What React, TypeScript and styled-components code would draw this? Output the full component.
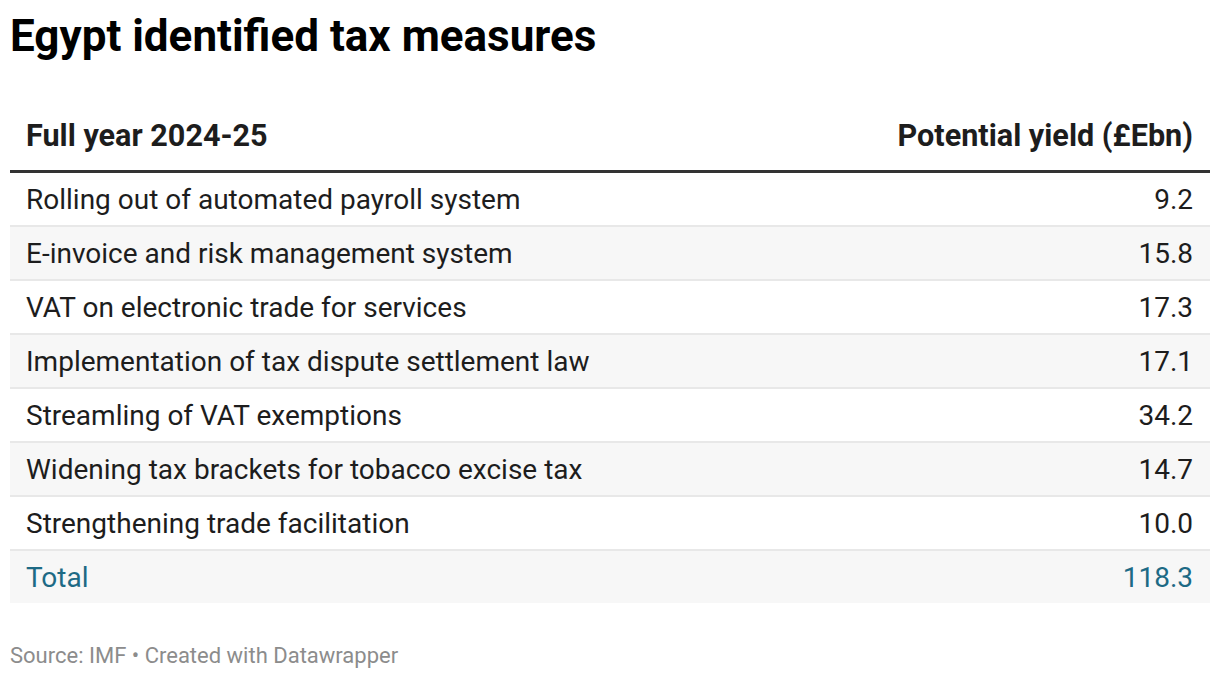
import styled, { createGlobalStyle } from "styled-components";

const rows: [string, string][] = [
  ["Rolling out of automated payroll system", "9.2"],
  ["E-invoice and risk management system", "15.8"],
  ["VAT on electronic trade for services", "17.3"],
  ["Implementation of tax dispute settlement law", "17.1"],
  ["Streamling of VAT exemptions", "34.2"],
  ["Widening tax brackets for tobacco excise tax", "14.7"],
  ["Strengthening trade facilitation", "10.0"],
];

export default function App() {
  return (
    <Page>
      <GlobalStyle />
      <Title>Egypt identified tax measures</Title>
      <Table>
        <Head>
          <span>Full year 2024-25</span>
          <span>Potential yield (£Ebn)</span>
        </Head>
        {rows.map(([label, value], i) => (
          <Row key={label} $striped={i % 2 === 1}>
            <span>{label}</span>
            <span>{value}</span>
          </Row>
        ))}
        <Row $striped $total>
          <span>Total</span>
          <span>118.3</span>
        </Row>
      </Table>
      <Footer>Source: IMF • Created with Datawrapper</Footer>
    </Page>
  );
}

const GlobalStyle = createGlobalStyle`
  body {
    margin: 0;
    background: #fff;
    font-family: Roboto, "Liberation Sans", sans-serif;
  }
`;

const Page = styled.div`
  padding: 10px 10px 0;
  width: 1200px;
`;

const Title = styled.h1`
  margin: 0;
  font-size: 44px;
  font-weight: 700;
  line-height: 52px;
  color: #000;
`;

const Table = styled.div`
  margin-top: 40px;
  display: flex;
  flex-direction: column;
`;

const Head = styled.div`
  display: flex;
  justify-content: space-between;
  align-items: center;
  padding: 0 17px 1px 16px;
  height: 67px;
  font-size: 30.6px;
  font-weight: 700;
  color: #1d1d1d;
  border-bottom: 3px solid #333;
`;

const Row = styled.div<{ $striped?: boolean; $total?: boolean }>`
  display: flex;
  justify-content: space-between;
  align-items: center;
  padding: 0 17px 0 16px;
  height: 52px;
  font-size: 28px;
  color: ${(p) => (p.$total ? "#1d6a85" : "#1d1d1d")};
  background: ${(p) => (p.$striped ? "#f7f7f7" : "#fff")};
  border-bottom: ${(p) => (p.$total ? "none" : "2px solid #e8e8e8")};
`;

const Footer = styled.div`
  margin-top: 40px;
  font-size: 22px;
  color: #8c8c8c;
`;
